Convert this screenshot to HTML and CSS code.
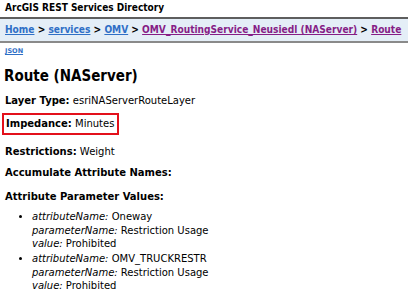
FILE: index.html
```html
<!DOCTYPE html>
<html>
<head>
<meta charset="utf-8">
<link rel="stylesheet" href="styles.css">
</head>
<body>
<div class="title">ArcGIS REST Services Directory</div>
<div class="crumbs">
  <a class="lnk" href="#">Home</a> &gt; <a class="lnk" href="#">services</a> &gt; <a class="lnk" href="#">OMV</a> &gt; <a class="vis" href="#">OMV_RoutingService_Neusiedl (NAServer)</a> &gt; <a class="vis" href="#">Route</a>
</div>
<div class="formats"><a class="lnk" href="#">JSON</a></div>
<h2 class="heading">Route (NAServer)</h2>
<div class="prop"><b>Layer Type:</b> esriNAServerRouteLayer</div>
<div class="prop boxed"><b>Impedance:</b> Minutes</div>
<div class="prop after-box"><b>Restrictions:</b> Weight</div>
<div class="prop tight"><b>Accumulate Attribute Names:</b></div>
<div class="prop loose"><b>Attribute Parameter Values:</b></div>
<ul class="params">
  <li><i>attributeName:</i> Oneway<br><i>parameterName:</i> Restriction Usage<br><i>value:</i> Prohibited</li>
  <li><i>attributeName:</i> OMV_TRUCKRESTR<br><i>parameterName:</i> Restriction Usage<br><i>value:</i> Prohibited</li>
</ul>
</body>
</html>
```
FILE: styles.css
```css
html, body {
  margin: 0;
  padding: 0;
  background: #fff;
  font-family: "DejaVu Sans", Verdana, sans-serif;
  color: #000;
  overflow: hidden;
}
.title {
  font-family: "DejaVu Sans Condensed", "DejaVu Sans", sans-serif;
  font-stretch: condensed;
  font-size: 10px;
  font-weight: bold;
  line-height: 12px;
  padding: 2px 5px 3px;
  border-bottom: 2px solid #5e5e5e;
}
.crumbs {
  background: #e4eef7;
  font-family: "DejaVu Sans Condensed", "DejaVu Sans", sans-serif;
  font-stretch: condensed;
  font-size: 10.1px;
  font-weight: bold;
  line-height: 22px;
  padding: 0 5px;
  border-bottom: 2px solid #8a8a8a;
  white-space: nowrap;
}
.lnk { color: #2f6fc6; }
.vis { color: #861d86; }
.formats {
  font-size: 6.5px;
  font-weight: bold;
  line-height: 8px;
  margin-top: 4px;
  padding: 0 5px;
}
.heading {
  font-family: "DejaVu Sans Condensed", "DejaVu Sans", sans-serif;
  font-stretch: condensed;
  font-size: 15px;
  font-weight: bold;
  line-height: 20px;
  margin: 11px 0 0 4px;
}
.prop {
  font-size: 10px;
  line-height: 14px;
  margin: 8px 0 0 5px;
}
.boxed {
  display: inline-block;
  border: 2px solid #e3101b;
  margin: 5px 0 0 2px;
  padding: 2px 3px 2px 2px;
}
.after-box { margin-top: 10px; }
.tight { margin-top: 7px; }
.loose { margin-top: 10px; }
.params {
  font-size: 10px;
  line-height: 13.5px;
  margin: 6px 0 0;
  padding-left: 32px;
}
.params li + li { margin-top: 1.5px; }
```
